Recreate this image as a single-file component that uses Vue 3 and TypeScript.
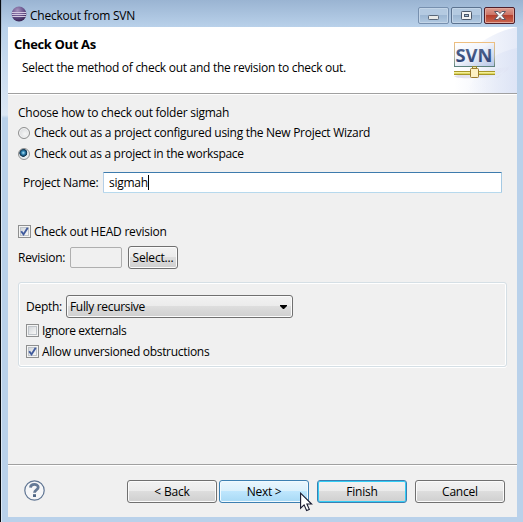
<script setup lang="ts">
import { ref } from 'vue'

type Method = 'wizard' | 'workspace'

const method = ref<Method>('workspace')
const projectName = ref('sigmah')
const headRevision = ref(true)
const ignoreExternals = ref(false)
const allowObstructions = ref(true)
</script>

<template>
  <div class="window">
    <header class="titlebar">
      <svg class="app-icon" width="16" height="16" viewBox="0 0 16 16">
        <defs>
          <radialGradient id="orb" cx=".4" cy=".25" r=".8">
            <stop offset="0" stop-color="#a692bd" />
            <stop offset=".55" stop-color="#66518a" />
            <stop offset="1" stop-color="#34224f" />
          </radialGradient>
        </defs>
        <circle cx="8" cy="8" r="7.4" fill="url(#orb)" />
        <path d="M1 6.5h14M.8 8.5h14.4M1.2 10.5h13.6" stroke="#d3c8e0" stroke-width="1" />
      </svg>
      <span class="caption">Checkout from SVN</span>
      <div class="controls">
        <span class="ctl">
          <svg width="29" height="15"><rect x="9.5" y="7.5" width="10" height="4" rx=".8" fill="#e9eae8" stroke="#596778" /></svg>
        </span>
        <span class="ctl mid">
          <svg width="29" height="15">
            <rect x="9.5" y="3.5" width="10" height="8" rx=".8" fill="#f3f3f3" stroke="#4d596b" />
            <rect x="12.5" y="6.5" width="4" height="2" fill="#a6bfd8" stroke="#4d596b" />
          </svg>
        </span>
        <span class="ctl close">
          <svg width="29" height="15">
            <path d="M9.5 3.5h3.6l1.9 2 1.9-2h3.6l-3.5 4 3.5 4h-3.6l-1.9-2-1.9 2H9.5l3.5-4z" fill="#f4f4f4" stroke="#5b5663" />
          </svg>
        </span>
      </div>
    </header>

    <main class="body">
      <section class="banner">
        <div class="banner-text">
          <h1>Check Out As</h1>
          <p class="desc">Select the method of check out and the revision to check out.</p>
        </div>
        <svg class="banner-art" width="75" height="66" viewBox="0 0 75 66">
          <defs>
            <linearGradient id="fade" x1="0" x2="1" y1="0" y2="0">
              <stop offset="0" stop-color="#e3e8f7" stop-opacity="0" />
              <stop offset="1" stop-color="#dce3f5" />
            </linearGradient>
            <linearGradient id="plate" x1="0" x2="1" y1="0" y2="1">
              <stop offset="0" stop-color="#ffffff" />
              <stop offset=".45" stop-color="#f1f4fb" />
              <stop offset="1" stop-color="#b5c5e6" />
            </linearGradient>
            <linearGradient id="edge" x1="0" x2="0" y1="0" y2="1">
              <stop offset="0" stop-color="#eebf80" />
              <stop offset=".6" stop-color="#b7b7a0" />
              <stop offset="1" stop-color="#5d827d" />
            </linearGradient>
            <linearGradient id="ink" x1="0" x2="0" y1="0" y2="1">
              <stop offset="0" stop-color="#5b6f97" />
              <stop offset="1" stop-color="#24386e" />
            </linearGradient>
            <linearGradient id="shade" x1="0" x2="1" y1="0" y2="0">
              <stop offset="0" stop-color="#c5bfd8" />
              <stop offset="1" stop-color="#dcdff0" stop-opacity=".3" />
            </linearGradient>
          </defs>
          <path d="M12 66C12 30 40 8 75 0v66z" fill="url(#fade)" opacity=".75" />
          <path d="M25 66C36 38 50 26 75 21v45z" fill="url(#fade)" opacity=".8" />
          <path d="M18 51h38l12-13-2 5-13 8z" fill="url(#shade)" opacity=".8" />
          <path d="M12 49c15-3 39-7 54-9-5 6-16 11-28 11-12 0-24 1-26-2z" fill="url(#shade)" opacity=".55" />
          <rect x="12.5" y="15.5" width="40" height="24" fill="url(#plate)" stroke="url(#edge)" />
          <text x="13.5" y="35" class="logo-text" textLength="37" lengthAdjust="spacingAndGlyphs" fill="url(#ink)">SVN</text>
          <path d="M12 44.5h41M12 47.5h41" stroke="#a89829" />
          <path d="M12 45.5h41" stroke="#f4ef9b" />
          <path d="M12 46.5h41" stroke="#ded761" />
          <rect x="30.5" y="39.5" width="4" height="2" fill="#eee8ab" stroke="#8f8533" />
          <rect x="28.5" y="41.5" width="8" height="9" rx="1" fill="#fdf0c3" stroke="#9b7a2d" />
        </svg>
      </section>

      <section class="form">
        <p class="line choose"><span>Choose how to check out folder sigmah</span></p>
        <label class="line option" @click="method = 'wizard'">
          <i class="radio" :class="{ on: method === 'wizard' }"></i>
          <span>Check out as a project configured using the New Project Wizard</span>
        </label>
        <label class="line option second" @click="method = 'workspace'">
          <i class="radio" :class="{ on: method === 'workspace' }"></i>
          <span class="t-work">Check out as a project in the workspace</span>
        </label>
        <div class="name-row">
          <span>Project Name:</span>
          <div class="field"><span>{{ projectName }}</span><i class="caret"></i></div>
        </div>

        <label class="line option head" @click="headRevision = !headRevision">
          <i class="check"><svg v-if="headRevision" width="11" height="11"><path d="M2.2 5.2l2.3 3.2L8.7 1.7" /></svg></i>
          <span class="t-head">Check out HEAD revision</span>
        </label>
        <div class="rev-row">
          <span class="t-rev">Revision:</span>
          <div class="rev-field"></div>
          <button class="btn select"><span>Select...</span></button>
        </div>

        <div class="group">
          <div class="depth-row">
            <span class="t-depth">Depth:</span>
            <div class="btn combo">
              <span class="t-full">Fully recursive</span>
              <svg width="7" height="4"><path d="M0 0h7v1L4 4H3L0 1z" fill="#000" /></svg>
            </div>
          </div>
          <label class="line option ext" @click="ignoreExternals = !ignoreExternals">
            <i class="check"><svg v-if="ignoreExternals" width="11" height="11"><path d="M2.2 5.2l2.3 3.2L8.7 1.7" /></svg></i>
            <span class="t-ext">Ignore externals</span>
          </label>
          <label class="line option obs" @click="allowObstructions = !allowObstructions">
            <i class="check"><svg v-if="allowObstructions" width="11" height="11"><path d="M2.2 5.2l2.3 3.2L8.7 1.7" /></svg></i>
            <span class="t-obs">Allow unversioned obstructions</span>
          </label>
        </div>
      </section>

      <footer class="footer">
        <svg class="help" width="21" height="21" viewBox="0 0 21 21">
          <circle cx="10.5" cy="10.5" r="9.7" fill="#f5f6f8" stroke="#5f7593" stroke-width="1.2" />
          <path d="M6.5 7.6C6.7 3.4 14.2 3.4 14.2 7.2c0 2.7-3.7 2.5-3.7 5.5" fill="none" stroke="#647996" stroke-width="2.8" />
          <rect x="9" y="14.2" width="3" height="2.8" fill="#4f6686" />
        </svg>
        <button class="btn nav"><span>&lt; Back</span></button>
        <button class="btn nav hot"><span>Next &gt;</span></button>
        <button class="btn nav default"><span>Finish</span></button>
        <button class="btn nav"><span>Cancel</span></button>
      </footer>
    </main>

    <svg class="cursor" width="13" height="20" viewBox="0 0 13 20">
      <path d="M.6 1.2v15l3.5-3.3 2.5 5.6 2.7-1.1-2.4-5.4h4.7z" fill="#fff" stroke="#17192f" stroke-width="1.1" />
    </svg>
  </div>
</template>

<style>
body {
  margin: 0;
  overflow: hidden;
}
</style>

<style scoped>
.window {
  position: relative;
  box-sizing: border-box;
  width: 523px;
  height: 522px;
  padding: 0 6px 5px 7px;
  border-left: 1px solid #060a10;
  background:
    linear-gradient(#8fa3ba, #dce8f4 60px) 0 0 / 1px 100% no-repeat,
    linear-gradient(#9ab4d2 0, #b9d1ea 27px, #dbe7f4 115px, #b9d1ea 118px) 0 0 / 7px 100% no-repeat,
    linear-gradient(#9ab4d2 0, #b9d1ea 27px, #b9d1ea 100%);
  font-family: "Open Sans", "Noto Sans", sans-serif;
  font-size: 12px;
  line-height: 16px;
  letter-spacing: -0.28px;
  color: #000;
}
h1, p { margin: 0; }
span { white-space: nowrap; }
.titlebar {
  display: flex;
  height: 27px;
}
.app-icon { margin: 6px 0 0 3px; }
.caption {
  margin: 8px 0 0 3px;
  letter-spacing: -0.22px;
}
.controls {
  display: flex;
  gap: 2px;
  margin: 7px 2px 0 auto;
}
.ctl {
  box-sizing: border-box;
  width: 31px;
  height: 17px;
  border: 1px solid #7790af;
  border-radius: 2px;
  background: linear-gradient(#b4cae1 0 45%, #9db7d3 50%, #b1c9e1);
  box-shadow: inset 0 0 0 1px #c3d5e8;
}
.ctl.mid { border-color: #5c7390; }
.ctl.close {
  border-color: #4e1f2b;
  background: linear-gradient(#dc9c90 0, #cd7466 45%, #b43f2d 50%, #cb6750);
  box-shadow: inset 0 0 0 1px #e2a79a;
}
.ctl svg, .check svg { display: block; }
.body {
  display: flex;
  flex-direction: column;
  width: 509px;
  height: 490px;
  background: #f0f0f0;
}
.banner {
  display: flex;
  justify-content: space-between;
  height: 66px;
  border-bottom: 1px solid #a0a0a0;
  background: #fff;
  box-shadow: 0 1px 0 #fff;
}
.banner-text { padding: 8px 0 0 6px; }
h1 {
  font-size: 13px;
  line-height: 18px;
  font-weight: 700;
  letter-spacing: -0.35px;
}
.desc {
  margin: 7px 0 0 8px;
  letter-spacing: -0.28px;
  white-space: nowrap;
}
.form {
  display: flex;
  flex-direction: column;
  height: 370px;
  padding: 0 10px;
  box-sizing: border-box;
}
.line {
  display: flex;
  align-items: center;
  height: 16px;
}
.choose {
  margin-top: 11px;
  letter-spacing: -0.25px;
}
.option { margin-top: 4px; gap: 4px; }
.option.second { margin-top: 5px; }
.radio {
  box-sizing: border-box;
  width: 12px;
  height: 12px;
  border: 1px solid #8e8f8f;
  border-radius: 50%;
  background: radial-gradient(circle at 60% 60%, #f6f6f6, #cfd2d5);
  box-shadow: inset 0 0 0 1px #f4f4f4;
}
.radio.on {
  background: radial-gradient(circle at 43% 38%, #b4e3f6 0, #3389b8 1.7px, #12405f 3.2px, #163a54 3.7px, #e6ebee 4.3px);
  box-shadow: none;
}
.name-row {
  display: flex;
  align-items: center;
  justify-content: space-between;
  height: 21px;
  margin: 10px 5px 0;
}
.field {
  box-sizing: border-box;
  display: flex;
  align-items: center;
  width: 399px;
  height: 21px;
  padding-left: 5px;
  border: 1px solid;
  border-color: #3d7bad #a4c9e3 #b7d9ed #b5cfe7;
  border-radius: 1px;
  background: #fff;
}
.caret {
  width: 1px;
  height: 15px;
  background: #000;
}
.head { margin-top: 31px; }
.t-head { letter-spacing: -0.22px; }
.t-work { letter-spacing: -0.3px; }
.check {
  box-sizing: border-box;
  width: 13px;
  height: 13px;
  border: 1px solid #8e8f8f;
  background: linear-gradient(135deg, #c9ced3, #f4f4f4 75%);
  box-shadow: inset 0 0 0 1px #f4f4f4, inset 0 0 0 2px #bfc4c9;
}
.option .check {
  margin: -1px -1px 0 0;
}
.check path {
  fill: none;
  stroke: #405b9d;
  stroke-width: 1.9;
}
.rev-row {
  display: flex;
  align-items: center;
  height: 23px;
  margin-top: 6px;
}
.t-rev { width: 52px; }
.rev-field {
  box-sizing: border-box;
  width: 52px;
  height: 21px;
  border: 1px solid #afafaf;
  border-radius: 2px;
}
.btn {
  box-sizing: border-box;
  display: flex;
  align-items: center;
  justify-content: center;
  height: 23px;
  padding: 0;
  border: 1px solid #707070;
  border-radius: 3px;
  background: linear-gradient(#f2f2f2, #ebebeb 48%, #dddddd 50%, #cfcfcf);
  box-shadow: inset 0 0 0 1px #fbfbfb;
  color: #000;
  font: inherit;
  letter-spacing: -0.2px;
}
.select {
  width: 50px;
  margin-left: 6px;
}
.group {
  box-sizing: border-box;
  height: 85px;
  width: 489px;
  margin-top: 13px;
  padding: 12px 7px 0;
  border: 1px solid #d5dfe5;
  border-radius: 3px;
  box-shadow: inset 0 0 0 1px #fff, 0 1px 0 #fff;
}
.depth-row {
  display: flex;
}
.t-depth {
  width: 40px;
  margin-top: 4px;
}
.combo {
  width: 227px;
  justify-content: space-between;
  padding: 0 5px 0 3px;
}
.t-full { letter-spacing: -0.33px; }
.t-ext { letter-spacing: -0.42px; }
.t-obs { letter-spacing: -0.3px; }
.ext { margin-top: 5px; }
.obs { margin-top: 5px; }
.footer {
  display: flex;
  height: 53px;
  box-sizing: border-box;
  border-top: 1px solid #a0a0a0;
  box-shadow: inset 0 1px 0 #fff;
  padding: 15px 12px 0 16px;
}
.help { margin-right: 82px; }
.nav { width: 90px; }
.nav + .nav { margin-left: 8px; }
.nav + .hot {
  margin-left: 2px;
  letter-spacing: -0.3px;
}
.hot {
  border-color: #3c7fb1;
  background: linear-gradient(#eaf6fd, #d9f0fc 48%, #bee6fd 50%, #a7d9f5);
  box-shadow: inset 0 0 0 1px #f0faff;
}
.btn.default {
  border-color: #3c7fb1;
  box-shadow: inset 0 0 0 1px #33cdf5;
}
.cursor {
  position: absolute;
  left: 299px;
  top: 492px;
}
.logo-text {
  font: 700 18px "Open Sans", sans-serif;
  letter-spacing: 0;
}
</style>
